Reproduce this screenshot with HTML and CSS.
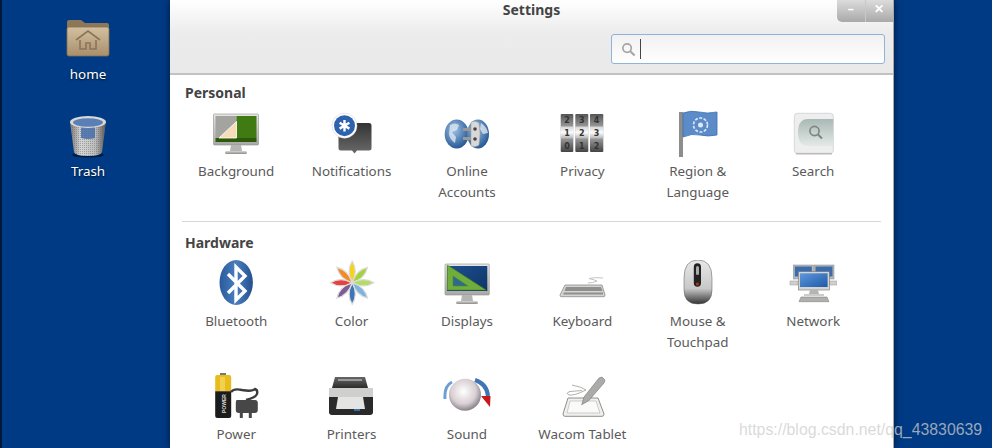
FILE: index.html
```html
<!DOCTYPE html>
<html lang="en">
<head>
    <meta charset="UTF-8">
    <title>Settings</title>
    <link rel="stylesheet" href="styles.css">
</head>
<body>
    <svg class="defs" aria-hidden="true">
        <defs>
            <linearGradient id="metal" x1="0" y1="0" x2="0" y2="1"><stop offset="0" stop-color="#e6e6e4"/><stop offset="1" stop-color="#a8a8a6"/></linearGradient>
            <linearGradient id="foot" x1="0" y1="0" x2="0" y2="1"><stop offset="0" stop-color="#d8d8d6"/><stop offset="1" stop-color="#8a8a88"/></linearGradient>
            <linearGradient id="bluescreen" x1="0" y1="0" x2="1" y2="1"><stop offset="0" stop-color="#1d4f8f"/><stop offset="1" stop-color="#0f3566"/></linearGradient>
            <linearGradient id="netscreen" x1="0" y1="0" x2="1" y2="1"><stop offset="0" stop-color="#5f97dc"/><stop offset="1" stop-color="#1d5aa8"/></linearGradient>
            <linearGradient id="bubble" x1="0" y1="0" x2="0" y2="1"><stop offset="0" stop-color="#333"/><stop offset="1" stop-color="#6a6a6a"/></linearGradient>
            <linearGradient id="keys" x1="0" y1="0" x2="0" y2="1"><stop offset="0" stop-color="#555"/><stop offset=".5" stop-color="#bbb"/><stop offset="1" stop-color="#444"/></linearGradient>
            <linearGradient id="mid" x1="0" y1="0" x2="0" y2="1"><stop offset="0" stop-color="#d5d5d5"/><stop offset=".5" stop-color="#fafafa"/><stop offset="1" stop-color="#b5b5b5"/></linearGradient>
            <linearGradient id="panel" x1="0" y1="0" x2="0" y2="1"><stop offset="0" stop-color="#a9b9b5"/><stop offset="1" stop-color="#e4e9e7"/></linearGradient>
            <linearGradient id="bt" x1="0" y1="0" x2="1" y2="0"><stop offset="0" stop-color="#2a5a9c"/><stop offset=".5" stop-color="#4a7fc0"/><stop offset="1" stop-color="#23508e"/></linearGradient>
            <linearGradient id="mouse" x1="0" y1="0" x2="0" y2="1"><stop offset="0" stop-color="#e8e8e8"/><stop offset=".65" stop-color="#c8c8c8"/><stop offset="1" stop-color="#333"/></linearGradient>
            <linearGradient id="folder" x1="0" y1="0" x2="0" y2="1"><stop offset="0" stop-color="#d3c0a0"/><stop offset="1" stop-color="#a98f6c"/></linearGradient>
            <linearGradient id="bin" x1="0" y1="0" x2="1" y2="0"><stop offset="0" stop-color="#777"/><stop offset=".3" stop-color="#d5d5d5"/><stop offset=".7" stop-color="#bdbdbd"/><stop offset="1" stop-color="#555"/></linearGradient>
            <linearGradient id="printer" x1="0" y1="0" x2="0" y2="1"><stop offset="0" stop-color="#666"/><stop offset="1" stop-color="#2c2c2c"/></linearGradient>
            <radialGradient id="knob" cx=".45" cy=".4" r=".65"><stop offset="0" stop-color="#fff"/><stop offset=".6" stop-color="#d8cfd2"/><stop offset="1" stop-color="#77707a"/></radialGradient>
            <radialGradient id="globe" cx=".4" cy=".35" r=".7"><stop offset="0" stop-color="#9cc2e8"/><stop offset="1" stop-color="#20528f"/></radialGradient>
            <pattern id="mesh" width="2" height="2" patternUnits="userSpaceOnUse"><rect width="1" height="1" fill="#666" opacity=".45"/></pattern>
        </defs>
    </svg>

    <aside class="desktop-icons">
        <div class="desktop-item">
            <svg class="icon" viewBox="0 0 48 48">
                <path d="M3 6a2 2 0 0 1 2-2h12l4 3h22a2 2 0 0 1 2 2v6H3z" fill="#8e7758"/>
                <path d="M3 13q0-2 2-2h38q2 0 2 2v25q0 2-2 2H5q-2 0-2-2z" fill="url(#folder)" stroke="#85704f" stroke-width=".8"/>
                <path d="M12 24 24 15l12 9M16 24v9h6v-6h4v6h6v-9" fill="none" stroke="#8a7557" stroke-width="1.600"/>
            </svg>
            <span>home</span>
        </div>
        <div class="desktop-item">
            <svg class="icon" viewBox="0 0 48 48">
                <ellipse cx="24" cy="42" rx="16" ry="2.500" fill="#001c44"/>
                <path d="M6 9 10 39q1 4 14 4t14-4l4-30z" fill="url(#bin)"/>
                <path d="M6 9 10 39q1 4 14 4t14-4l4-30z" fill="url(#mesh)"/>
                <path d="M17 13h14v12q-7 2-14 0z" fill="#3f68a8" opacity=".8"/>
                <ellipse cx="24" cy="9" rx="18" ry="6" fill="#d8d8d8"/>
                <ellipse cx="24" cy="9.500" rx="15" ry="4.200" fill="#5a7fb4"/>
            </svg>
            <span>Trash</span>
        </div>
    </aside>

    <main class="window">
        <header class="titlebar">
            <div class="title">Settings</div>
            <div class="controls">
                <span class="control">&#8211;</span>
                <span class="control">&#10005;</span>
            </div>
            <div class="search-row">
                <div class="search">
                    <svg class="search-icon" viewBox="0 0 16 16"><circle cx="6.500" cy="6.500" r="4.500" fill="none" stroke="#a5a5a5" stroke-width="1.800"/><path d="M10 10l4.500 4.500" stroke="#a5a5a5" stroke-width="2.200"/></svg>
                    <span class="caret"></span>
                </div>
            </div>
        </header>

        <div class="content">
            <section class="group">
                <h2>Personal</h2>
                <div class="grid">
                    <div class="item">
                        <svg class="icon" viewBox="0 0 48 48">
                            <rect x="1.500" y="4" width="45" height="31" rx="1" fill="url(#metal)" stroke="#8f8f8d" stroke-width=".6"/>
                            <rect x="3.500" y="6" width="21" height="22" fill="#a3a4a0"/>
                            <rect x="24.500" y="6" width="20" height="22" fill="#3f7a12"/>
                            <rect x="3.500" y="28" width="41" height="4" fill="#2c5a08"/>
                            <path d="M7 28 24.500 11.500V28z" fill="#f6dcb8" stroke="#fff" stroke-width=".8"/>
                            <path d="M19 35h10l1 6H18z" fill="#b5b5b3"/>
                            <rect x="13" y="41" width="22" height="3" rx="1.500" fill="url(#foot)"/>
                        </svg>
                        <span>Background</span>
                    </div>
                    <div class="item">
                        <svg class="icon" viewBox="0 0 48 48">
                            <path d="M13 13h28q2.500 0 2.500 2.500v22.500q0 2.500-2.500 2.500H29l-2.500 3-2.500-3H13q-2.500 0-2.500-2.500V15.500Q10.500 13 13 13z" fill="url(#bubble)"/>
                            <circle cx="16.500" cy="15.700" r="12.500" fill="#fff" stroke="#ccc" stroke-width=".5"/>
                            <circle cx="16.500" cy="15.700" r="10.500" fill="#2f62ad"/>
                            <path d="M16.500 10v11.400M11.600 12.800l9.800 5.800M21.400 12.800l-9.800 5.800" stroke="#fff" stroke-width="2.400"/>
                        </svg>
                        <span>Notifications</span>
                    </div>
                    <div class="item">
                        <svg class="icon" viewBox="0 0 48 48">
                            <ellipse cx="13.700" cy="24" rx="12" ry="14.500" fill="url(#globe)"/>
                            <path d="M7 15q5-3 9 0l-2 5-5 2 4 5-1 6q-5-3-6-9z" fill="#dde6ee" opacity=".8"/>
                            <ellipse cx="35" cy="24" rx="11" ry="14.500" fill="url(#globe)"/>
                            <path d="M38 13q6 4 7 10l-5 1-3-5z" fill="#dde6ee" opacity=".8"/>
                            <rect x="20" y="18" width="9" height="3" fill="#999"/>
                            <rect x="20" y="27" width="9" height="3" fill="#999"/>
                            <path d="M28 12q5-2 8 1 2 10 0 22-3 3-8 1z" fill="#d8d8d8" stroke="#999" stroke-width=".5"/>
                            <circle cx="32" cy="19" r="1.800" fill="#444"/>
                            <circle cx="32" cy="29" r="1.800" fill="#444"/>
                        </svg>
                        <span>Online<br>Accounts</span>
                    </div>
                    <div class="item">
                        <svg class="icon digits" viewBox="0 0 48 48">
                            <rect x="2.700" y="4" width="12.600" height="38" rx="1" fill="url(#keys)"/>
                            <rect x="17.300" y="4" width="13" height="38" rx="1" fill="url(#keys)"/>
                            <rect x="32" y="4" width="13.300" height="38" rx="1" fill="url(#keys)"/>
                            <rect x="2.700" y="16.500" width="12.600" height="12" fill="url(#mid)"/>
                            <rect x="17.300" y="16.500" width="13" height="12" fill="url(#mid)"/>
                            <rect x="32" y="16.500" width="13.300" height="12" fill="url(#mid)"/>
                            <text x="9" y="12.500">2</text><text x="23.800" y="12.500">3</text><text x="38.600" y="12.500">4</text>
                            <text x="9" y="26">1</text><text x="23.800" y="26">2</text><text x="38.600" y="26">3</text>
                            <text x="9" y="39">0</text><text x="23.800" y="39">1</text><text x="38.600" y="39">2</text>
                        </svg>
                        <span>Privacy</span>
                    </div>
                    <div class="item">
                        <svg class="icon" viewBox="0 0 48 48">
                            <rect x="5" y="2" width="4" height="45" fill="#8d8d8b"/>
                            <path d="M9 3q8-3 16-1t18 0v23q-9 2-17 0t-17 2z" fill="#5b8cc9" stroke="#3d6db0" stroke-width=".8"/>
                            <circle cx="26.500" cy="15" r="7" fill="none" stroke="#dfe9f5" stroke-width="1.600" stroke-dasharray="3 1.500"/>
                            <circle cx="26.500" cy="15" r="2.500" fill="#dfe9f5"/>
                        </svg>
                        <span>Region &amp;<br>Language</span>
                    </div>
                    <div class="item">
                        <svg class="icon" viewBox="0 0 48 48">
                            <rect x="5.300" y="3.300" width="39" height="40" rx="3" fill="#eee" stroke="#d0d0d0" stroke-width=".8"/>
                            <path d="M44.300 9H19q-10 0-10 13.500T19 36h25.300z" fill="url(#panel)"/>
                            <circle cx="25.500" cy="21" r="4.600" fill="none" stroke="#7d8583" stroke-width="1.700"/>
                            <path d="M29 24.500l4 4" stroke="#7d8583" stroke-width="2"/>
                            <rect x="7" y="43" width="36" height="1.500" fill="#bbb"/>
                        </svg>
                        <span>Search</span>
                    </div>
                </div>
            </section>

            <hr class="separator">

            <section class="group">
                <h2>Hardware</h2>
                <div class="grid">
                    <div class="item">
                        <svg class="icon" viewBox="0 0 48 48">
                            <ellipse cx="24.200" cy="22.500" rx="16.700" ry="22.500" fill="url(#bt)"/>
                            <path d="M16 14 33 31l-9 9V7l9 9-17 17" fill="none" stroke="#fff" stroke-width="3.400"/>
                        </svg>
                        <span>Bluetooth</span>
                    </div>
                    <div class="item">
                        <svg class="icon" viewBox="0 0 48 48">
                            <g stroke="#dcdcdc" stroke-width="1.200">
                                <path transform="rotate(0 24.200 22.700)" d="M24.200 22.700Q18 11 24.200 1q6.200 10 0 21.700z" fill="#f4d21f"/>
                                <path transform="rotate(45 24.200 22.700)" d="M24.200 22.700Q18 11 24.200 1q6.200 10 0 21.700z" fill="#a4d23a"/>
                                <path transform="rotate(90 24.200 22.700)" d="M24.200 22.700Q18 11 24.200 1q6.200 10 0 21.700z" fill="#b4dd62"/>
                                <path transform="rotate(135 24.200 22.700)" d="M24.200 22.700Q18 11 24.200 1q6.200 10 0 21.700z" fill="#80b4de"/>
                                <path transform="rotate(180 24.200 22.700)" d="M24.200 22.700Q18 11 24.200 1q6.200 10 0 21.700z" fill="#3f74b6"/>
                                <path transform="rotate(225 24.200 22.700)" d="M24.200 22.700Q18 11 24.200 1q6.200 10 0 21.700z" fill="#7f5a96"/>
                                <path transform="rotate(270 24.200 22.700)" d="M24.200 22.700Q18 11 24.200 1q6.200 10 0 21.700z" fill="#e6433f"/>
                                <path transform="rotate(315 24.200 22.700)" d="M24.200 22.700Q18 11 24.200 1q6.200 10 0 21.700z" fill="#f38a24"/>
                            </g>
                        </svg>
                        <span>Color</span>
                    </div>
                    <div class="item">
                        <svg class="icon" viewBox="0 0 48 48">
                            <rect x="2" y="4" width="44.300" height="31" rx="1" fill="url(#metal)" stroke="#8f8f8d" stroke-width=".6"/>
                            <rect x="4" y="6" width="40.300" height="25" fill="url(#bluescreen)"/>
                            <path d="M4.300 5 43 30H4.300z" fill="#6fae3c" stroke="#4d8a22" stroke-width=".6"/>
                            <path d="M10 16v10h15z" fill="#2f6a8e" stroke="#4d8a22" stroke-width=".6"/>
                            <path d="M19 35h10l1 6H18z" fill="#b5b5b3"/>
                            <rect x="13" y="41" width="22" height="3" rx="1.500" fill="url(#foot)"/>
                        </svg>
                        <span>Displays</span>
                    </div>
                    <div class="item">
                        <svg class="icon" viewBox="0 0 48 48">
                            <path d="M45 18q-8-1-14 .5 6 1.500 8 2.500-4 2-9 2" fill="none" stroke="#c4c4c4" stroke-width="1"/>
                            <path d="M7 25h37l3 10q0 1.700-1 1.700H3q-1 0-1-1.700z" fill="#d4d4d2" stroke="#8a8a88" stroke-width=".8"/>
                            <path d="M8 27h35l1.500 4H6.500zM6 32.500h39v2H5z" fill="#8f8f8d"/>
                        </svg>
                        <span>Keyboard</span>
                    </div>
                    <div class="item">
                        <svg class="icon" viewBox="0 0 48 48">
                            <path d="M24 0q14 0 14 18v12q0 14-14 14T10 30V18Q10 0 24 0z" fill="url(#mouse)" stroke="#555" stroke-width=".5"/>
                            <rect x="19.800" y="3.300" width="7.200" height="23.400" rx="3.600" fill="#222"/>
                            <rect x="22" y="6" width="3" height="9" rx="1.500" fill="#aaa"/>
                            <circle cx="23.400" cy="24" r="1.500" fill="#c33010"/>
                        </svg>
                        <span>Mouse &amp;<br>Touchpad</span>
                    </div>
                    <div class="item">
                        <svg class="icon" viewBox="0 0 48 48">
                            <rect x="4.300" y="5" width="20" height="14" fill="#b9b9b7" stroke="#888" stroke-width=".5"/>
                            <rect x="5.800" y="6.500" width="17" height="10" fill="#3a6cae"/>
                            <rect x="25" y="5" width="20" height="14" fill="#b9b9b7" stroke="#888" stroke-width=".5"/>
                            <rect x="26.500" y="6.500" width="17" height="10" fill="#3a6cae"/>
                            <rect x="1" y="21" width="8" height="4" fill="#cfcfcf" stroke="#999" stroke-width=".5"/>
                            <rect x="40" y="21" width="8" height="4" fill="#cfcfcf" stroke="#999" stroke-width=".5"/>
                            <rect x="9.300" y="11.700" width="31" height="18.300" fill="#d4d4d2" stroke="#777" stroke-width=".6"/>
                            <rect x="11" y="13.300" width="27.600" height="13.700" fill="url(#netscreen)"/>
                            <path d="M21 30h8l1 4H20z" fill="#b5b5b3"/>
                            <rect x="15" y="34" width="20" height="2" fill="#ccc"/>
                            <path d="M12 37h26l2 4.700H10z" fill="#b0b0ae" stroke="#777" stroke-width=".5"/>
                        </svg>
                        <span>Network</span>
                    </div>
                    <div class="item">
                        <svg class="icon" viewBox="0 0 48 48">
                            <path d="M8 0h6v2.500H8z" fill="#777"/>
                            <path d="M3.200 4q0-2 2-2h12q2 0 2 2v14.300h-16z" fill="#e8bc1e"/>
                            <path d="M3.200 18.300h16V43q0 2-2 2h-12q-2 0-2-2z" fill="#1c1c1c"/>
                            <rect x="8" y="4" width="5" height="14" fill="#f6dc60" opacity=".7"/>
                            <path d="M19 19q3-4 11-2 10 2 13-1 3 1 2 5-2 4-11 6" fill="none" stroke="#3c3c3c" stroke-width="2.400"/>
                            <path d="M25 27h18q2.800 0 2.800 3v7q0 3-3 3h-3v5h-3v-5h-6v5h-3v-5h-1q-3 0-3-3v-7q0-3 1-3z" fill="#474747"/>
                            <text class="power-text" transform="translate(13.500 40) rotate(-90)">POWER</text>
                        </svg>
                        <span>Power</span>
                    </div>
                    <div class="item">
                        <svg class="icon" viewBox="0 0 48 48">
                            <path d="M7 4h30l3 11H4z" fill="url(#printer)"/>
                            <rect x="10" y="6" width="24" height="2" fill="#999"/>
                            <rect x="1" y="15" width="44" height="9" fill="#cfcfcd"/>
                            <path d="M1 24h44v15q0 3-3 3H4q-3 0-3-3z" fill="#2a2a2a"/>
                            <path d="M10 24h25l2 12H8z" fill="#e4e4e2"/>
                            <rect x="26" y="36" width="6" height="2" fill="#3070b0"/>
                        </svg>
                        <span>Printers</span>
                    </div>
                    <div class="item">
                        <svg class="icon" viewBox="0 0 48 48">
                            <path d="M2 26Q1 13 9 9" fill="none" stroke="#6e9fd2" stroke-width="3"/>
                            <path d="M32 7q12 4 13 16" fill="none" stroke="#3f74b6" stroke-width="4"/>
                            <path d="M38 23h9.500l-.5 11z" fill="#c8171d"/>
                            <circle cx="22" cy="21.700" r="16" fill="url(#knob)"/>
                        </svg>
                        <span>Sound</span>
                    </div>
                    <div class="item">
                        <svg class="icon" viewBox="0 0 48 48">
                            <path d="M10 25h30l6 16q0 2.300-2 2.300H7q-2 0-2-2.300z" fill="#f0f0ee" stroke="#8e8e8c" stroke-width="1"/>
                            <path d="M12 28h26l4 12H9z" fill="#fafafa" stroke="#c0c0be" stroke-width=".8"/>
                            <path d="M14 12q10 2 14 5-12 6-17 5-4-2 1-3.500l12-1" fill="none" stroke="#9a9a98" stroke-width=".8"/>
                            <path d="M47 7 44 4l-3 1-15 19-2.300 7.700 7-4L46 10z" fill="#a9aca8" stroke="#777" stroke-width=".6"/>
                        </svg>
                        <span>Wacom Tablet</span>
                    </div>
                </div>
            </section>
        </div>
    </main>

    <div class="watermark">https://blog.csdn.net/qq_43830639</div>
</body>
</html>
```

FILE: styles.css
```css
html, body {
    height: 100%;
}

body {
    margin: 0;
    display: flex;
    overflow: hidden;
    background: #003a84;
    border-left: 2px solid #001a3c;
    box-sizing: border-box;
    font-family: 'Noto Sans', sans-serif;
    font-size: 13.4px;
    color: #5a5a5a;
}

.defs {
    position: absolute;
    width: 0;
    height: 0;
}

.icon {
    display: block;
    width: 48px;
    height: 48px;
    flex: none;
}

.desktop-icons {
    width: 168px;
    flex: none;
    padding: 16px 0 0 36px;
    box-sizing: border-box;
    display: flex;
    flex-direction: column;
    gap: 29px;
}

.desktop-item {
    width: 100px;
    display: flex;
    flex-direction: column;
    align-items: center;
    color: #fff;
    line-height: 20px;
    text-shadow: 0 1px 2px rgba(0, 0, 0, 0.8);
}

.window {
    width: 723px;
    flex: none;
    background: #fff;
    border-right: 1px solid #a8a8a8;
    box-shadow: 0 0 7px rgba(0, 0, 0, 0.6);
    position: relative;
}

.titlebar {
    height: 73px;
    border-bottom: 2px solid #c2c2c2;
    background: linear-gradient(#ffffff, #ececec 45%, #e9e9e9);
}

.title {
    height: 34px;
    line-height: 19px;
    text-align: center;
    font-weight: 700;
    font-size: 14px;
    color: #444;
}

.controls {
    position: absolute;
    top: 0;
    right: 0;
    width: 56px;
    height: 22px;
    display: flex;
    border-radius: 0 0 0 5px;
    background: linear-gradient(#dcdcdc, #a9a9a9);
}

.control {
    flex: 1;
    text-align: center;
    line-height: 18px;
    color: #fff;
    font-size: 12px;
    font-weight: 700;
}

.control + .control {
    border-left: 1px solid #c9c9c9;
}

.search-row {
    display: flex;
    justify-content: flex-end;
    padding-right: 8px;
}

.search {
    width: 274px;
    height: 30px;
    box-sizing: border-box;
    border: 1px solid #8fb4dc;
    border-radius: 3px;
    background: linear-gradient(#f1f1f1, #ffffff);
    display: flex;
    align-items: center;
    padding-left: 9px;
    gap: 4px;
}

.search-icon {
    width: 15px;
    height: 15px;
}

.caret {
    width: 1px;
    height: 20px;
    background: #444;
}

.content {
    padding: 8px 12px 0 9px;
}

h2 {
    margin: 0 0 7px 6px;
    font-size: 14px;
    line-height: 20px;
    font-weight: 700;
    color: #444;
}

.grid {
    display: grid;
    grid-template-columns: repeat(6, 115.4px);
    row-gap: 20px;
    margin-left: -0.5px;
}

.item {
    display: flex;
    flex-direction: column;
    align-items: center;
    gap: 3px;
    line-height: 21px;
    text-align: center;
    min-height: 93px;
}

.separator {
    border: 0;
    height: 1px;
    background: #d8d8d8;
    margin: 18px 0 11px 3px;
}

.digits text {
    font-family: 'DejaVu Sans', sans-serif;
    font-size: 8px;
    font-weight: 700;
    text-anchor: middle;
    fill: #333;
}

.power-text {
    font-family: 'Liberation Sans', sans-serif;
    font-size: 5px;
    font-weight: 700;
    fill: #ddd;
}

.watermark {
    position: absolute;
    left: 739px;
    top: 420px;
    font-family: 'Liberation Sans', sans-serif;
    font-size: 15.85px;
    line-height: 20px;
    color: rgba(205, 205, 205, 0.75);
    white-space: nowrap;
}
```
